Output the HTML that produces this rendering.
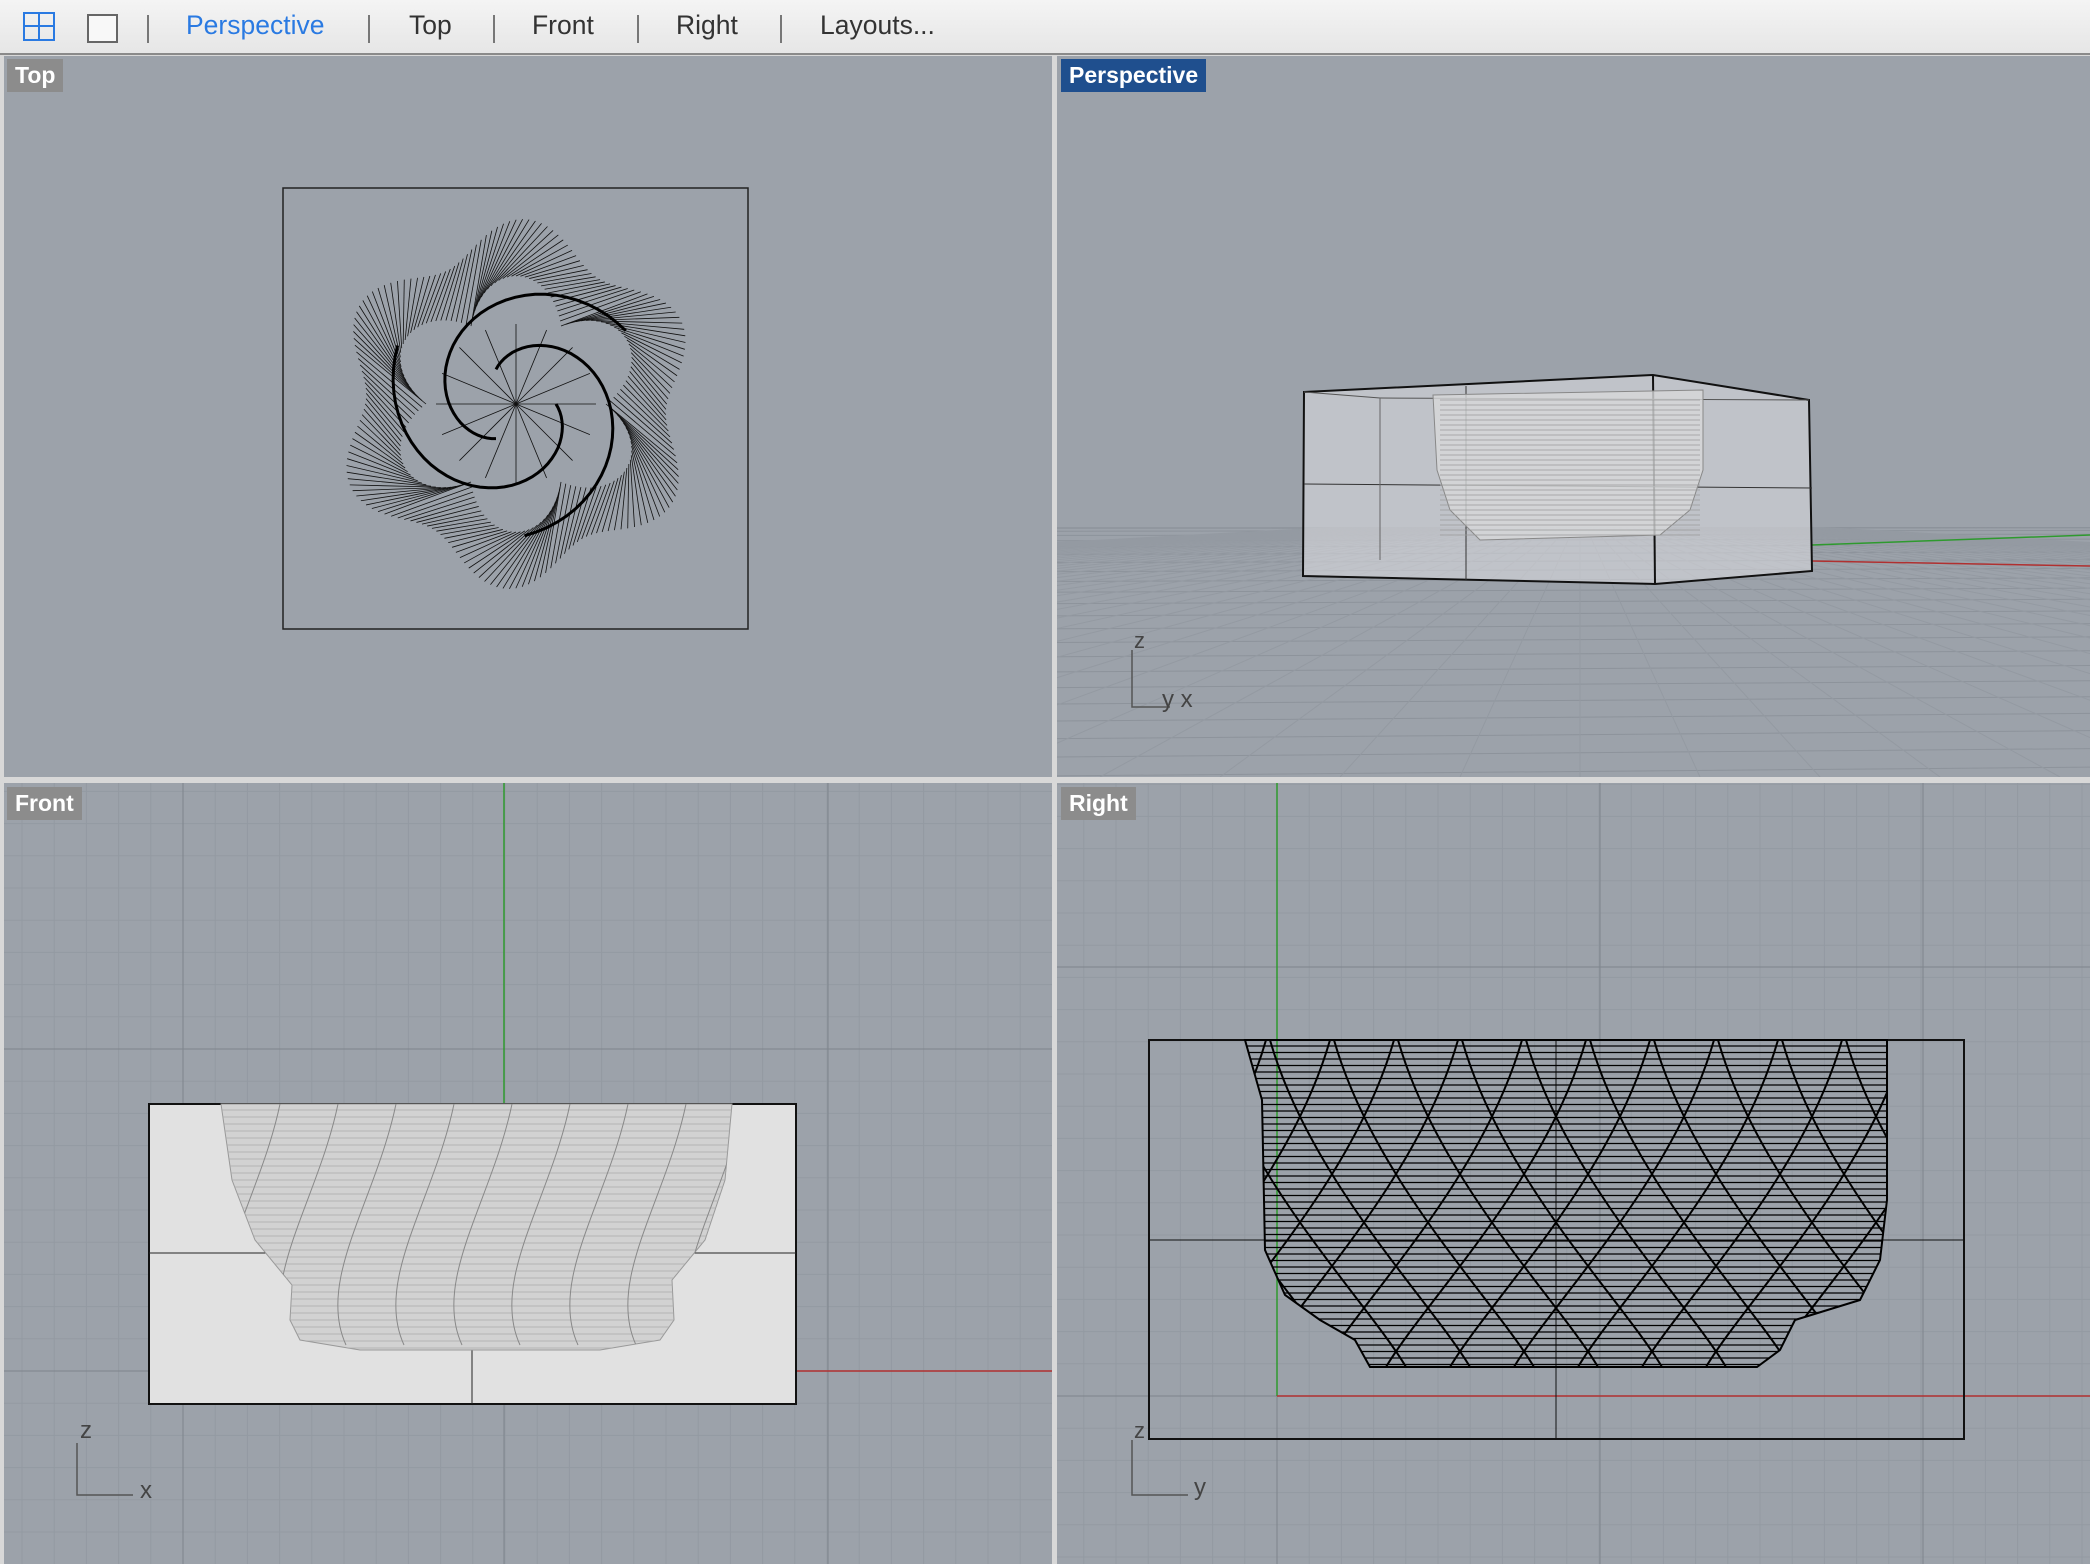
<!DOCTYPE html>
<html><head><meta charset="utf-8"><style>
html,body{margin:0;padding:0;width:2090px;height:1564px;overflow:hidden;background:#d8d8d8;font-family:"Liberation Sans",sans-serif}
#tb{position:absolute;left:0;top:0;width:2090px;height:53px;background:linear-gradient(#f4f4f4,#e6e6e6);border-bottom:2px solid #8a8a8a}
#tb span{position:absolute;top:10px;font-size:26.5px;color:#333}
.sep{position:absolute;top:15px;width:2px;height:28px;background:#777}
.lbl{position:absolute;background:#8c8c8c;color:#fff;font-weight:bold;font-size:23px;padding:2px 8px;line-height:29px}
svg{position:absolute;left:0;top:0}
</style></head><body>
<div id="tb">
<svg width="40" height="40" style="left:22px;top:11px" viewBox="0 0 40 40"><rect x="2" y="2" width="30" height="27" fill="none" stroke="#2a7ae2" stroke-width="2"/><line x1="17" y1="2" x2="17" y2="29" stroke="#2a7ae2" stroke-width="2"/><line x1="2" y1="15" x2="32" y2="15" stroke="#2a7ae2" stroke-width="2"/></svg>
<svg width="40" height="40" style="left:86px;top:11px" viewBox="0 0 40 40"><rect x="2" y="4" width="29" height="27" fill="#f8f8f8" stroke="#666" stroke-width="2"/></svg>
<div class="sep" style="left:147px"></div>
<span style="left:186px;color:#2a7ae2">Perspective</span>
<div class="sep" style="left:368px"></div>
<span style="left:409px">Top</span>
<div class="sep" style="left:493px"></div>
<span style="left:532px">Front</span>
<div class="sep" style="left:637px"></div>
<span style="left:676px">Right</span>
<div class="sep" style="left:780px"></div>
<span style="left:820px">Layouts...</span>
</div>
<svg id="s" width="2090" height="1564">
<rect x="4" y="56" width="1048" height="721" fill="#9ca2aa"/>
<rect x="1057" y="56" width="1033" height="721" fill="#9ca2aa"/>
<rect x="4" y="783" width="1048" height="781" fill="#9ca2aa"/>
<rect x="1057" y="783" width="1033" height="781" fill="#9ca2aa"/>
<g id="g"></g>
</svg>
<div class="lbl" style="left:7px;top:59px">Top</div>
<div class="lbl" style="left:1061px;top:59px;background:#1f4f8e">Perspective</div>
<div class="lbl" style="left:7px;top:787px">Front</div>
<div class="lbl" style="left:1061px;top:787px">Right</div>
<script>
var g=document.getElementById('g'),h='';
function L(a,b,c,d,col,w){h+='<line x1="'+a+'" y1="'+b+'" x2="'+c+'" y2="'+d+'" stroke="'+col+'" stroke-width="'+(w||1)+'"/>';}
function P(pts,f,s,w){h+='<polygon points="'+pts+'" fill="'+f+'" stroke="'+s+'" stroke-width="'+(w||1)+'"/>';}
var bowl='1245,1040 1887,1040 1887,1200 1880,1260 1860,1300 1795,1320 1780,1350 1757,1367 1370,1367 1355,1340 1320,1320 1285,1295 1265,1250 1262,1100';
var fb='221,1104 732,1104 725,1180 705,1240 672,1280 674,1320 660,1340 600,1350 360,1350 300,1340 290,1320 292,1285 255,1240 232,1180';
h+='<defs><clipPath id="c1"><rect x="4" y="783" width="1048" height="781"/></clipPath><clipPath id="c2"><rect x="1057" y="783" width="1033" height="781"/></clipPath><clipPath id="c3"><rect x="1057" y="527" width="1033" height="250"/></clipPath><clipPath id="cb"><polygon points="'+bowl+'"/></clipPath><clipPath id="cf"><polygon points="'+fb+'"/></clipPath></defs>';
// front grid
h+='<g clip-path="url(#c1)">';
for(var x=183-32.2*6;x<1052;x+=32.2)L(x,783,x,1564,'#939aa2');
for(var y=1371-32.2*19;y<1564;y+=32.2)L(4,y,1052,y,'#939aa2');
[183,504,828].forEach(function(x){L(x,783,x,1564,'#7e848c')});
[1049,1371].forEach(function(y){L(4,y,1052,y,'#7e848c')});
L(504,783,504,1104,'#2e9a2e',1.5);L(796,1371,1052,1371,'#b03030',1.5);
h+='<rect x="149" y="1104" width="647" height="300" fill="#e1e1e1" stroke="#111" stroke-width="2"/>';
L(472,1104,472,1404,'#222');L(149,1253,796,1253,'#222');
P(fb,'#d2d2d2','#999');
h+='<g clip-path="url(#cf)">';
for(var y=1110;y<1350;y+=7){L(215,y,735,y,'#aaa',0.8)}
for(var i=0;i<10;i++){var x0=240+i*58;h+='<path d="M'+(x0+40)+' 1104 C '+(x0+20)+' 1200, '+(x0-40)+' 1280, '+(x0-10)+' 1345" fill="none" stroke="#888"/>';}
h+='</g></g>';
// right grid
h+='<g clip-path="url(#c2)">';
for(var x=1277-32.2*7;x<2090;x+=32.2)L(x,783,x,1564,'#939aa2');
for(var y=1396-32.2*19;y<1564;y+=32.2)L(1057,y,2090,y,'#939aa2');
[1277,1600,1923].forEach(function(x){L(x,783,x,1564,'#7e848c')});
[967,1396].forEach(function(y){L(1057,y,2090,y,'#7e848c')});
L(1277,783,1277,1396,'#2e9a2e',1.5);L(1277,1396,2090,1396,'#b03030',1.5);
h+='<rect x="1149" y="1040" width="815" height="399" fill="none" stroke="#111" stroke-width="2"/>';
L(1556,1040,1556,1439,'#111');L(1149,1240,1964,1240,'#111');
P(bowl,'none','#000',2);
h+='<g clip-path="url(#cb)">';
for(var y=1046;y<1368;y+=6.5){L(1240,y,1890,y,'#000',1.3)}
for(var i=-2;i<12;i++){var x0=1270+i*64;h+='<path d="M'+x0+' 1040 C '+(x0+40)+' 1180, '+(x0+160)+' 1300, '+(x0+200)+' 1367" fill="none" stroke="#000" stroke-width="2"/>';h+='<path d="M'+(x0+60)+' 1040 C '+(x0+20)+' 1180, '+(x0-100)+' 1300, '+(x0-140)+' 1367" fill="none" stroke="#000" stroke-width="2"/>';}
h+='</g></g>';
// perspective floor
h+='<g clip-path="url(#c3)">';
for(var i=0;i<30;i++){var y=527+Math.pow(i,1.7)*1.3;L(1057,y,2090,y-i*0.4,'#8d939b')}
for(var i=-40;i<40;i++){L(1580+i*6,527,1580+i*120,777,'#949aa2')}
L(1812,545,2090,535,'#2e9a2e',1.5);L(1812,561,2090,566,'#b03030',1.5);
h+='</g>';
P('1304,392 1653,375 1809,400 1812,571 1655,584 1303,576','rgba(222,223,225,0.55)','#111',2);
L(1653,375,1655,584,'#111',2);L(1304,484,1812,488,'#333');L(1466,386,1466,580,'#333');
L(1304,392,1380,398,'#555');L(1380,398,1809,400,'#555');L(1380,398,1380,560,'#666');
P('1433,395 1703,390 1703,470 1690,510 1660,535 1480,540 1450,510 1437,470','rgba(215,216,218,0.8)','#888');
for(var y=400;y<540;y+=5)L(1440,y,1700,y,'#9a9a9a',0.7);
// axis icons
h+='<path d="M1132 650 V707 H1170" fill="none" stroke="#555" stroke-width="1.5"/><text x="1134" y="648" font-size="22" fill="#444">z</text><text x="1162" y="707" font-size="24" fill="#444">y x</text>';
h+='<path d="M77 1443 V1495 H133" fill="none" stroke="#555" stroke-width="1.5"/><text x="80" y="1438" font-size="24" fill="#444">z</text><text x="140" y="1498" font-size="24" fill="#444">x</text>';
h+='<path d="M1132 1440 V1495 H1188" fill="none" stroke="#555" stroke-width="1.5"/><text x="1134" y="1438" font-size="22" fill="#444">z</text><text x="1194" y="1495" font-size="24" fill="#444">y</text>';
// top view
h+='<rect x="283" y="188" width="465" height="441" fill="none" stroke="#222" stroke-width="1.5"/>';
var cx=516,cy=404;
for(var i=0;i<16;i++){var a=i*Math.PI/8;L(cx,cy,cx+80*Math.cos(a),cy+80*Math.sin(a),'#111',0.8)}
for(var i=0;i<180;i++){var a=i*2*Math.PI/180;var r1=90+38*Math.abs(Math.sin(3*a));var r2=150+35*Math.pow(Math.abs(Math.sin(3*(a+0.3))),2);L(cx+r1*Math.cos(a),cy+r1*Math.sin(a),cx+r2*Math.cos(a+0.35),cy+r2*Math.sin(a+0.35),'#111',0.8)}
for(var k=0;k<3;k++){var s=k*2*Math.PI/3,d='';for(var t=0;t<=40;t++){var a=s+t*0.09;var r=40+t*2.3;d+=(t?'L':'M')+(cx+r*Math.cos(a)).toFixed(1)+' '+(cy+r*Math.sin(a)).toFixed(1)}h+='<path d="'+d+'" fill="none" stroke="#000" stroke-width="3"/>';}
g.innerHTML=h;
</script>
</body></html>
